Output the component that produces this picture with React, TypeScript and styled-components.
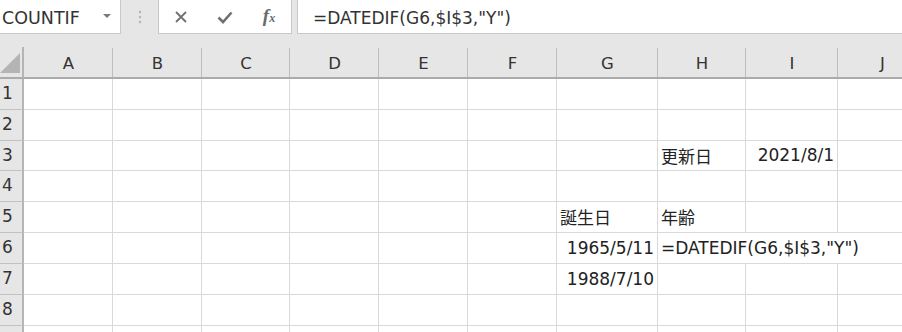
import React from 'react';
import styled, {createGlobalStyle} from 'styled-components';

const COLS = ['A', 'B', 'C', 'D', 'E', 'F', 'G', 'H', 'I', 'J'];
const ROWS = [1, 2, 3, 4, 5, 6, 7, 8, 9];
const VISIBLE_ROWS = 8;

type Cell = {text: string; align?: 'left' | 'right'; span?: number};

const cells: Record<string, Cell> = {
  H3: {text: '更新日'},
  I3: {text: '2021/8/1', align: 'right'},
  G5: {text: '誕生日'},
  H5: {text: '年齢'},
  G6: {text: '1965/5/11', align: 'right'},
  H6: {text: '=DATEDIF(G6,$I$3,"Y")', span: 3},
  G7: {text: '1988/7/10', align: 'right'},
};

const App: React.FC = () => {
  const renderRow = (row: number) => {
    const out: React.ReactNode[] = [];
    let skip = 0;
    COLS.forEach(col => {
      if (skip > 0) {
        skip--;
        return;
      }
      const cell = cells[`${col}${row}`];
      const span = cell?.span ?? 1;
      skip = span - 1;
      out.push(
        <GridCell key={col} $span={span} $align={cell?.align ?? 'left'}>
          {cell?.text}
        </GridCell>,
      );
    });
    return out;
  };

  return (
    <Window>
      <GlobalStyle />
      <FormulaBar>
        <NameBox>
          <span>COUNTIF</span>
          <DropArrow />
        </NameBox>
        <Grip>
          <svg width="4" height="14" viewBox="0 0 4 14">
            <circle cx="2" cy="2" r="1.2" fill="#b3b3b3" />
            <circle cx="2" cy="7" r="1.2" fill="#b3b3b3" />
            <circle cx="2" cy="12" r="1.2" fill="#b3b3b3" />
          </svg>
        </Grip>
        <ButtonBox>
          <IconSlot>
            <svg width="14" height="14" viewBox="0 0 14 14">
              <path d="M2 2 L12 12 M12 2 L2 12" stroke="#707070" strokeWidth="1.8" fill="none" />
            </svg>
          </IconSlot>
          <IconSlot>
            <svg width="16" height="14" viewBox="0 0 16 14">
              <path d="M1.5 7.5 L6 12 L14.5 2.5" stroke="#707070" strokeWidth="2.6" fill="none" />
            </svg>
          </IconSlot>
          <IconSlot>
            <Fx>
              f<sub>x</sub>
            </Fx>
          </IconSlot>
        </ButtonBox>
        <FormulaInput>=DATEDIF(G6,$I$3,"Y")</FormulaInput>
      </FormulaBar>
      <Grid>
        <Corner>
          <svg width="20" height="20" viewBox="0 0 20 20">
            <polygon points="20,0 20,20 0,20" fill="#b4b4b4" />
          </svg>
        </Corner>
        {COLS.map(c => (
          <ColHead key={c}>{c}</ColHead>
        ))}
        {ROWS.map(r => (
          <React.Fragment key={r}>
            <RowHead>{r <= VISIBLE_ROWS ? r : ''}</RowHead>
            {renderRow(r)}
          </React.Fragment>
        ))}
      </Grid>
    </Window>
  );
};

export default App;

const GlobalStyle = createGlobalStyle`
  body {
    margin: 0;
    background: #fff;
    font-family: "DejaVu Sans", "Noto Sans CJK JP", sans-serif;
    color: #222;
    overflow: hidden;
  }
`;

const Window = styled.div`
  width: 902px;
  height: 332px;
  overflow: hidden;
`;

const FormulaBar = styled.div`
  display: flex;
  align-items: flex-start;
  height: 47px;
  background: #e6e6e6;
`;

const NameBox = styled.div`
  box-sizing: border-box;
  width: 121px;
  height: 34px;
  background: #fff;
  border-right: 1px solid #c8c8c8;
  border-bottom: 1px solid #c8c8c8;
  display: flex;
  align-items: center;
  justify-content: space-between;
  padding: 2px 9px 0 2px;
  font-size: 17.5px;
  color: #333;
`;

const DropArrow = styled.span`
  width: 0;
  height: 0;
  border-left: 4px solid transparent;
  border-right: 4px solid transparent;
  border-top: 4px solid #7a7a7a;
  margin-top: -3px;
`;

const Grip = styled.div`
  width: 37px;
  height: 34px;
  display: flex;
  align-items: center;
  justify-content: center;
`;

const ButtonBox = styled.div`
  box-sizing: border-box;
  width: 134px;
  height: 34px;
  background: #fff;
  border-left: 1px solid #c8c8c8;
  border-right: 1px solid #c8c8c8;
  border-bottom: 1px solid #c8c8c8;
  display: flex;
`;

const IconSlot = styled.div`
  flex: 1;
  display: flex;
  align-items: center;
  justify-content: center;
`;

const Fx = styled.span`
  font-family: "Liberation Serif", serif;
  font-style: italic;
  font-weight: bold;
  font-size: 19px;
  color: #6a6a6a;
  margin-top: -2px;
  sub {
    font-size: 12px;
    vertical-align: 0;
  }
`;

const FormulaInput = styled.div`
  box-sizing: border-box;
  flex: 1;
  height: 34px;
  margin-left: 5px;
  background: #fff;
  border-left: 1px solid #c8c8c8;
  border-bottom: 1px solid #c8c8c8;
  display: flex;
  align-items: center;
  padding: 2px 0 0 15px;
  font-size: 17px;
  color: #333;
`;

const Grid = styled.div`
  display: grid;
  width: max-content;
  grid-template-columns: 24px 89px 89px 88px 89px 89px 89px 101px 88px 92px 89px;
  grid-template-rows: 32px 31px 31px 30px 31px 31px 31px 31px 31px 31px;
`;

const Corner = styled.div`
  box-sizing: border-box;
  background: #e6e6e6;
  border-right: 2px solid #b5b5b5;
  border-bottom: 2px solid #ababab;
  display: flex;
  align-items: flex-end;
  padding-bottom: 4px;
`;

const ColHead = styled.div`
  box-sizing: border-box;
  background: #e6e6e6;
  border-bottom: 2px solid #ababab;
  display: flex;
  align-items: center;
  justify-content: center;
  padding-top: 2px;
  font-size: 16.5px;
  color: #333;
  position: relative;
  &::after {
    content: '';
    position: absolute;
    right: 0;
    top: 1px;
    bottom: 0;
    width: 1px;
    background: #bdbdbd;
  }
`;

const RowHead = styled.div`
  box-sizing: border-box;
  background: #e6e6e6;
  border-right: 2px solid #b5b5b5;
  border-bottom: 1px solid #c2c2c2;
  display: flex;
  align-items: center;
  padding: 0 0 2px 2px;
  font-size: 17px;
  color: #333;
`;

const GridCell = styled.div<{$span: number; $align: 'left' | 'right'}>`
  box-sizing: border-box;
  grid-column: span ${p => p.$span};
  border-right: 1px solid #d9d9d9;
  border-bottom: 1px solid #d9d9d9;
  display: flex;
  align-items: center;
  justify-content: ${p => (p.$align === 'right' ? 'flex-end' : 'flex-start')};
  padding: 0 3px 1px 3px;
  font-size: 17px;
  color: #222;
  white-space: nowrap;
  overflow: hidden;
`;
